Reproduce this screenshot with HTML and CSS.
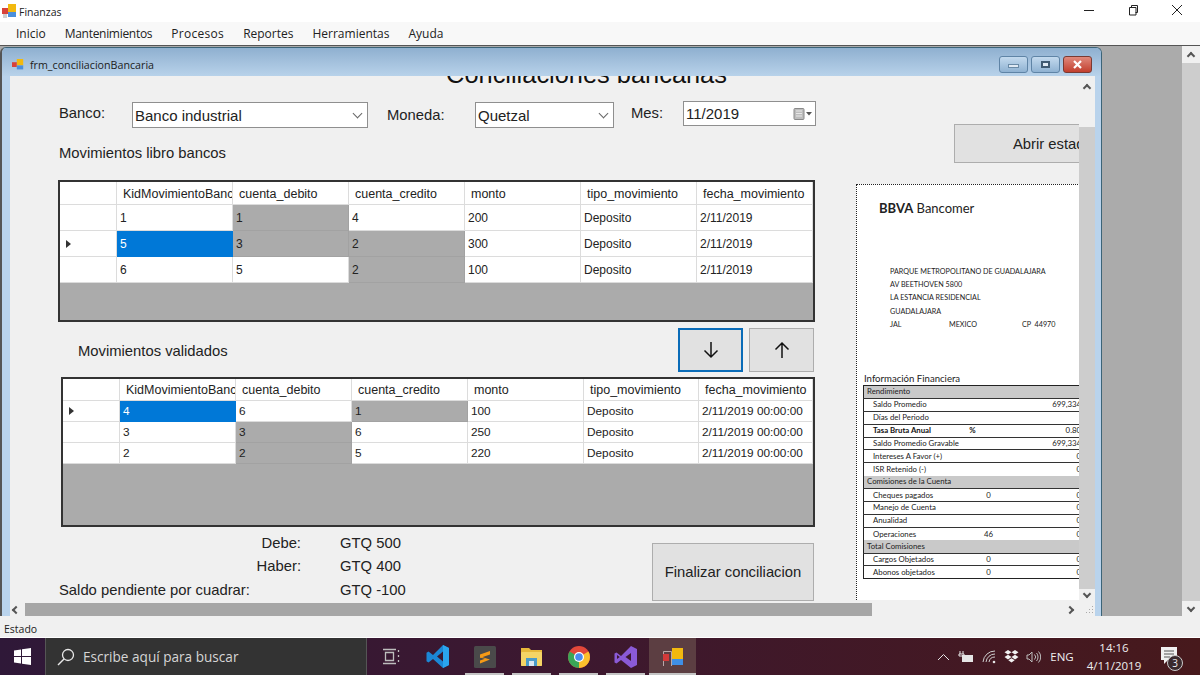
FILE: index.html
```html
<!DOCTYPE html>
<html>
<head>
  <title>Finanzas</title>
  <link rel="stylesheet" href="styles.css">
</head>
<body>
  <div class="titlebar">
    <svg class="app-icon" width="15" height="15" viewBox="0 0 15 15"><rect x="6" y="0" width="8" height="8" fill="#f2b90f"/><rect x="0" y="4" width="6" height="6" fill="#d8423a"/><rect x="6" y="8" width="8" height="5" fill="#4b8fdc"/><rect x="1" y="10" width="4" height="4" fill="#cfcfcf"/></svg>
    <span class="titlebar-text">Finanzas</span>
    <div class="wincontrols">
      <span class="winbtn"><svg width="12" height="12" viewBox="0 0 12 12"><path d="M1 6.5h10" stroke="#222" fill="none"/></svg></span>
      <span class="winbtn"><svg width="12" height="12" viewBox="0 0 12 12"><path d="M2.5 3.5h6.5v7.500h-6.500zM4.500 3.500v-2h6v7h-2" stroke="#222" fill="none"/></svg></span>
      <span class="winbtn"><svg width="12" height="12" viewBox="0 0 12 12"><path d="M1 1l10 10M11 1l-10 10" stroke="#222" fill="none"/></svg></span>
    </div>
  </div>

  <div class="menubar">
    <span class="menu-item">Inicio</span>
    <span class="menu-item menu-tight">Mantenimientos</span>
    <span class="menu-item menu-loose">Procesos</span>
    <span class="menu-item">Reportes</span>
    <span class="menu-item">Herramientas</span>
    <span class="menu-item">Ayuda</span>
  </div>

  <div class="mdi">
    <div class="mdi-canvas">
      <div class="child">
        <div class="child-title">
          <svg class="child-icon" width="12" height="12" viewBox="0 0 15 15"><rect x="6" y="0" width="8" height="8" fill="#f2b90f"/><rect x="0" y="4" width="6" height="6" fill="#d8423a"/><rect x="6" y="8" width="8" height="5" fill="#4b8fdc"/></svg>
          <span class="child-name">frm_conciliacionBancaria</span>
          <div class="child-btns">
            <span class="child-btn"><i class="glyph-min"></i></span>
            <span class="child-btn"><i class="glyph-max"></i></span>
            <span class="child-btn child-close"><svg width="11" height="9" viewBox="0 0 11 9"><path d="M2 1l7 7M9 1l-7 7" stroke="#fff" stroke-width="2.200" fill="none"/></svg></span>
          </div>
        </div>
        <div class="client">
          <div class="client-top">
            <div class="content">
              <div class="heading"><h1>Conciliaciones bancarias</h1></div>
              <div class="columns">
                <div class="left-col">
                  <div class="filters">
                    <label class="lbl lbl-banco">Banco:</label>
                    <div class="combo combo-banco">Banco industrial<i class="combo-chev"></i></div>
                    <label class="lbl lbl-moneda">Moneda:</label>
                    <div class="combo combo-moneda">Quetzal<i class="combo-chev"></i></div>
                    <label class="lbl lbl-mes">Mes:</label>
                    <div class="combo combo-date">11/2019
                      <svg class="date-icon" width="20" height="12" viewBox="0 0 20 12"><rect x="1" y="0.500" width="10" height="11" rx="1" fill="#bdbdbd" stroke="#8a8a8a"/><path d="M3 3h6M3 5.500h6M3 8h6" stroke="#e8e8e8"/><path d="M13 4h6l-3 3.500z" fill="#555"/></svg>
                    </div>
                  </div>

                  <div class="lbl section-label">Movimientos libro bancos</div>
                  <div class="grid grid-one">
                    <table>
                      <colgroup><col class="c-head"><col class="c-116"><col class="c-116"><col class="c-116"><col class="c-116"><col class="c-116"><col class="c-116"></colgroup>
                      <tr class="head"><th></th><th>KidMovimientoBanco</th><th>cuenta_debito</th><th>cuenta_credito</th><th>monto</th><th>tipo_movimiento</th><th>fecha_movimiento</th></tr>
                      <tr><td></td><td>1</td><td class="off">1</td><td>4</td><td>200</td><td>Deposito</td><td>2/11/2019</td></tr>
                      <tr><td><i class="row-arrow"></i></td><td class="sel">5</td><td class="off">3</td><td class="off">2</td><td>300</td><td>Deposito</td><td>2/11/2019</td></tr>
                      <tr><td></td><td>6</td><td>5</td><td class="off">2</td><td>100</td><td>Deposito</td><td>2/11/2019</td></tr>
                    </table>
                  </div>

                  <div class="mid-row">
                    <div class="lbl mid-label">Movimientos validados</div>
                    <div class="move-btns">
                      <button class="btn btn-move btn-focus"><svg width="18" height="18" viewBox="0 0 18 18"><path d="M9 1v15M2.500 9.500l6.500 6.500 6.500-6.500" stroke="#111" stroke-width="1.500" fill="none"/></svg></button>
                      <button class="btn btn-move"><svg width="18" height="18" viewBox="0 0 18 18"><path d="M9 17v-15M2.500 8.500l6.500-6.500 6.500 6.500" stroke="#111" stroke-width="1.500" fill="none"/></svg></button>
                    </div>
                  </div>

                  <div class="grid grid-two">
                    <table>
                      <colgroup><col class="c-head"><col class="c-116"><col class="c-116"><col class="c-116"><col class="c-116"><col class="c-115"><col class="c-114"></colgroup>
                      <tr class="head"><th></th><th>KidMovimientoBanco</th><th>cuenta_debito</th><th>cuenta_credito</th><th>monto</th><th>tipo_movimiento</th><th>fecha_movimiento</th></tr>
                      <tr><td><i class="row-arrow"></i></td><td class="sel">4</td><td>6</td><td class="off">1</td><td>100</td><td>Deposito</td><td>2/11/2019 00:00:00</td></tr>
                      <tr><td></td><td>3</td><td class="off">3</td><td>6</td><td>250</td><td>Deposito</td><td>2/11/2019 00:00:00</td></tr>
                      <tr><td></td><td>2</td><td class="off">2</td><td>5</td><td>220</td><td>Deposito</td><td>2/11/2019 00:00:00</td></tr>
                    </table>
                  </div>

                  <div class="bottom-row">
                    <div class="summary">
                      <span class="lbl sum-key">Debe:</span><span class="lbl">GTQ 500</span>
                      <span class="lbl sum-key">Haber:</span><span class="lbl">GTQ 400</span>
                      <span class="lbl">Saldo pendiente por cuadrar:</span><span class="lbl">GTQ -100</span>
                    </div>
                    <button class="btn btn-finish">Finalizar conciliacion</button>
                  </div>
                </div>

                <div class="right-col">
                  <button class="btn btn-open">Abrir estado de cuenta</button>
                  <div class="statement">
                    <div class="bank-logo"><b>BBVA</b> Bancomer</div>
                    <div class="address">
                      <div>PARQUE METROPOLITANO DE GUADALAJARA</div>
                      <div>AV BEETHOVEN 5800</div>
                      <div>LA ESTANCIA RESIDENCIAL</div>
                      <div>GUADALAJARA</div>
                      <div class="addr-last"><span>JAL</span><span>MEXICO</span><span>CP&nbsp; 44970</span></div>
                    </div>
                    <div class="info-title">Información Financiera</div>
                    <table class="info">
                      <colgroup><col class="i-label"><col class="i-mid"><col class="i-value"></colgroup>
                      <tr class="band"><td colspan="3">Rendimiento</td></tr>
                      <tr><td>Saldo Promedio</td><td></td><td>699,334</td></tr>
                      <tr><td>Días del Periodo</td><td></td><td></td></tr>
                      <tr class="strong"><td>Tasa Bruta Anual</td><td class="pct">%</td><td>0.80</td></tr>
                      <tr><td>Saldo Promedio Gravable</td><td></td><td>699,334</td></tr>
                      <tr><td>Intereses A Favor (+)</td><td></td><td>0</td></tr>
                      <tr><td>ISR Retenido (-)</td><td></td><td>0</td></tr>
                      <tr class="band"><td colspan="3">Comisiones de la Cuenta</td></tr>
                      <tr><td>Cheques pagados</td><td>0</td><td>0</td></tr>
                      <tr><td>Manejo de Cuenta</td><td></td><td>0</td></tr>
                      <tr><td>Anualidad</td><td></td><td>0</td></tr>
                      <tr><td>Operaciones</td><td>46</td><td>0</td></tr>
                      <tr class="band"><td colspan="3">Total Comisiones</td></tr>
                      <tr><td>Cargos Objetados</td><td>0</td><td>0</td></tr>
                      <tr><td>Abonos objetados</td><td>0</td><td>0</td></tr>
                    </table>
                  </div>
                </div>
              </div>
            </div>
            <div class="vscroll">
              <i class="chev chev-up"></i>
              <div class="vtrack"><div class="vthumb"></div></div>
              <i class="chev chev-down"></i>
            </div>
          </div>
          <div class="hscroll">
            <i class="chev chev-left"></i>
            <div class="hthumb"></div>
            <i class="chev chev-right"></i>
            <svg class="grip" width="12" height="12" viewBox="0 0 12 12"><path d="M9 2h1v1h-1zM6 5h1v1h-1zM9 5h1v1h-1zM3 8h1v1h-1zM6 8h1v1h-1zM9 8h1v1h-1z" fill="#aaa"/></svg>
          </div>
        </div>
      </div>
    </div>
    <div class="outer-scroll">
      <i class="chev chev-up"></i>
      <div class="outer-thumb"></div>
      <i class="chev chev-down"></i>
    </div>
  </div>

  <div class="statusbar">Estado</div>

  <div class="taskbar">
    <div class="start">
      <svg width="17" height="17" viewBox="0 0 17 17"><path d="M0 2.500l7-1v6.500h-7zM8 1.300l9-1.300v8h-9zM0 9h7v6.500l-7-1zM8 9h9v8l-9-1.300z" fill="#fff"/></svg>
    </div>
    <div class="search">
      <svg width="18" height="18" viewBox="0 0 18 18"><circle cx="11" cy="7" r="5.500" stroke="#e8e8e8" stroke-width="1.300" fill="none"/><path d="M7 11l-6 6" stroke="#e8e8e8" stroke-width="1.500"/></svg>
      <span>Escribe aquí para buscar</span>
    </div>
    <div class="task">
      <svg width="18" height="17" viewBox="0 0 18 17"><path d="M3.500 4.500h8v8h-8zM1 1.500h13M1 15.500h13" stroke="#bdbdbd" stroke-width="1.300" fill="none"/><path d="M16.500 2v2M16.500 7v2M16.500 12v2" stroke="#bdbdbd" stroke-width="1.300"/></svg>
    </div>
    <div class="task">
      <svg width="24" height="23" viewBox="0 0 24 23"><path d="M17 0l6 3v17l-6 3-10-9-4.500 3.500-2-1.200v-8.600l2-1.200 4.500 3.500zM17 6.500l-6 5 6 5z" fill="#1b87d6"/><path d="M17 0l6 3v17l-6 3z" fill="#2aa4ee"/></svg>
    </div>
    <div class="task task-open">
      <svg width="22" height="22" viewBox="0 0 22 22"><rect width="22" height="22" rx="1.500" fill="#4a4a4a"/><path d="M6 8.500l10-3.500v3.500l-10 3.500zM6 10.500l10 3v0l-10 4v-3l5-1.800-5-1.200z" fill="#f59a16"/></svg>
    </div>
    <div class="task task-open">
      <svg width="21" height="19" viewBox="0 0 21 19"><path d="M0 1h8l2 2h11v15a1 1 0 0 1-1 1h-19a1 1 0 0 1-1-1z" fill="#e8b93a"/><rect x="0" y="5" width="21" height="14" rx="1" fill="#f5d566"/><rect x="5" y="11" width="11" height="8" fill="#4b9bc9"/><rect x="8" y="14" width="5" height="5" fill="#d9e8f2"/></svg>
    </div>
    <div class="task task-open">
      <svg width="22" height="22" viewBox="0 0 22 22"><circle cx="11" cy="11" r="11" fill="#e2483a"/><path d="M11 11L1.500 5.500A11 11 0 0 0 11 22z" fill="#3aa757"/><path d="M11 11v11A11 11 0 0 0 20.500 5.500z" fill="#fbc02d"/><circle cx="11" cy="11" r="5" fill="#fff"/><circle cx="11" cy="11" r="3.800" fill="#4a8bf0"/></svg>
    </div>
    <div class="task task-open">
      <svg width="24" height="22" viewBox="0 0 24 22"><path d="M17 0l6 3v16l-6 3-10-8-4.500 3.500-2-1v-9l2-1 4.500 3.500zM17 7l-5.500 4 5.500 4zM3 9v4l2.800-2z" fill="#8a5ad6" fill-rule="evenodd"/></svg>
    </div>
    <div class="task task-open task-active">
      <svg width="22" height="20" viewBox="0 0 22 20"><path d="M1.500 4.500h8M1.500 19v-14.500M9.500 4.500v14.500" stroke="#b8a8a8" fill="none"/><rect x="1" y="7" width="6" height="7" fill="#d33a3a"/><rect x="10" y="1" width="11" height="11" fill="#f2b90f"/><rect x="10" y="12" width="11" height="6" fill="#3f8fe6"/></svg>
    </div>

    <div class="tray">
      <span class="tray-ico t-chev"><svg width="13" height="8" viewBox="0 0 13 8"><path d="M1 7l5.500-5.500L12 7" stroke="#e6e6e6" fill="none"/></svg></span>
      <span class="tray-ico t-batt"><svg width="16" height="13" viewBox="0 0 16 13"><path d="M2 1v3M5 1v3M1 4h5v2h-5z" stroke="#e6e6e6" fill="none"/><rect x="4" y="5" width="11" height="7" fill="#e6e6e6"/></svg></span>
      <span class="tray-ico t-wifi"><svg width="16" height="14" viewBox="0 0 16 14"><path d="M1 12a12 12 0 0 1 12-11M4 12a9 9 0 0 1 9-8M7 12a6 6 0 0 1 6-5" stroke="#cfcfcf" fill="none"/><circle cx="12" cy="12" r="1.300" fill="#e6e6e6"/></svg></span>
      <span class="tray-ico t-drop"><svg width="15" height="14" viewBox="0 0 15 14"><path d="M4 0l3.500 2.300L4 4.600.5 2.300zM11 0l3.500 2.300L11 4.600 7.500 2.300zM4 4.800l3.500 2.300L4 9.400.5 7.100zM11 4.800l3.500 2.300-3.500 2.300-3.500-2.300zM4.300 10.300l3.200-2 3.200 2-3.200 2.200z" fill="#f2f2f2"/></svg></span>
      <span class="tray-ico t-vol"><svg width="15" height="14" viewBox="0 0 15 14"><path d="M1 5h2l3-3v10l-3-3h-2zM8.500 4.500a3.500 3.500 0 0 1 0 5M10.500 3a6 6 0 0 1 0 8M12.500 1.500a8 8 0 0 1 0 11" stroke="#bdbdbd" fill="none"/></svg></span>
      <span class="tray-lang">ENG</span>
      <div class="clock"><div>14:16</div><div>4/11/2019</div></div>
      <div class="notif">
        <svg width="17" height="19" viewBox="0 0 17 19"><path d="M0 0h16v13h-9l-4 4v-4h-3z" fill="#f0f0f0"/><path d="M3 4h10M3 7h10M3 10h6" stroke="#555"/></svg>
        <span class="badge">3</span>
      </div>
    </div>
  </div>
</body>
</html>
```

FILE: styles.css
```css
* {
  box-sizing: border-box;
}

html, body {
  margin: 0;
  padding: 0;
}

body {
  width: 1200px;
  height: 675px;
  display: flex;
  flex-direction: column;
  overflow: hidden;
  font-family: "Liberation Sans", Arial, sans-serif;
  color: #222;
  background: #f0f0f0;
}

/* top window */
.titlebar {
  height: 22px;
  flex: none;
  display: flex;
  align-items: center;
  background: #fff;
  padding-left: 2px;
}

.titlebar-text {
  font-family: "Open Sans", sans-serif;
  font-size: 10.5px;
  margin-left: 2px;
  margin-top: 1px;
}

.wincontrols {
  display: flex;
  margin-left: auto;
  margin-top: -2px;
  margin-right: 1px;
}

.winbtn {
  width: 44px;
  display: flex;
  justify-content: center;
}

.menubar {
  height: 23px;
  flex: none;
  display: flex;
  align-items: center;
  padding-left: 6.5px;
  background: #f8f8f8;
  font-family: "Open Sans", sans-serif;
  font-size: 12px;
}

.menu-item {
  padding: 0 9.5px;
}

.menu-tight {
  letter-spacing: -0.3px;
}

.menu-loose {
  letter-spacing: 0.3px;
}

/* mdi area */
.mdi {
  flex: 1;
  min-height: 0;
  display: flex;
  border-top: 1px solid #555;
  background: #ababab;
}

.mdi-canvas {
  flex: 1;
  overflow: hidden;
  padding-top: 1px;
}

.child {
  width: 1102px;
  height: 100%;
  display: flex;
  flex-direction: column;
  background: #b9d3ec;
  border: 1px solid #3c6478;
  border-left: 2px solid #555;
  border-bottom: none;
  border-radius: 6px 6px 0 0;
}

.child-title {
  height: 28px;
  flex: none;
  display: flex;
  align-items: center;
  padding: 6px 0 0 10px;
  background: linear-gradient(#8fb0d0, #b8d2ea);
  border-radius: 5px 5px 0 0;
}

.child-name {
  font-family: "Open Sans", sans-serif;
  font-size: 10.7px;
  margin-left: 6px;
  color: #1c1c1c;
}

.child-btns {
  display: flex;
  gap: 3px;
  margin-left: auto;
  margin-right: 9px;
  margin-top: -2px;
}

.child-btn {
  width: 29px;
  height: 17px;
  display: flex;
  align-items: center;
  justify-content: center;
  border: 1px solid #5f84a6;
  border-radius: 3px;
  background: linear-gradient(#c4daee, #8fb2d2);
}

.child-close {
  border-color: #7a3a32;
  background: linear-gradient(#e0897c, #c23f2e);
}

.glyph-min {
  width: 11px;
  height: 4px;
  margin-top: 3px;
  border: 1px solid #6a8aa6;
  background: #dfe9f3;
}

.glyph-max {
  width: 9px;
  height: 7px;
  border: 2px solid #3f5a72;
  background: #dfe9f3;
}

.client {
  flex: 1;
  min-height: 0;
  display: flex;
  flex-direction: column;
  margin: 0 6px 0 8px;
  background: #f0f0f0;
}

.client-top {
  flex: 1;
  min-height: 0;
  display: flex;
}

.content {
  flex: 1;
  min-width: 0;
  overflow: hidden;
}

.heading {
  height: 10px;
  overflow: hidden;
  display: flex;
  align-items: flex-end;
  padding: 0 0 3px 84px;
  justify-content: center;
}

.heading h1 {
  margin: 0;
  flex: none;
  font-size: 25.4px;
  font-weight: normal;
  line-height: 18px;
  color: #111;
}

.columns {
  display: flex;
}

.left-col {
  width: 846px;
  flex: none;
  padding-left: 49px;
}

.lbl {
  font-size: 14.8px;
  line-height: 18px;
  color: #222;
}

/* filters row */
.filters {
  display: flex;
  align-items: center;
  height: 26px;
  margin-top: 16px;
}

.lbl-banco {
  width: 73px;
  margin-top: -4px;
}

.lbl-moneda {
  width: 88px;
  margin-left: 19px;
}

.lbl-mes {
  width: 52px;
  margin-left: 17px;
  margin-top: -4px;
}

.combo {
  height: 26px;
  display: flex;
  align-items: center;
  padding-left: 2px;
  font-size: 15px;
  background: #fff;
  border: 1px solid #8f8f8f;
}

.combo-banco {
  width: 236px;
}

.combo-moneda {
  width: 139px;
}

.combo-date {
  width: 133px;
  height: 25px;
  margin-top: -3px;
}

.combo-chev {
  width: 7px;
  height: 7px;
  margin-left: auto;
  margin-right: 6px;
  margin-top: -3px;
  border-right: 1px solid #666;
  border-bottom: 1px solid #666;
  transform: rotate(45deg);
}

.date-icon {
  margin-left: auto;
  margin-right: 2px;
}

.section-label {
  margin-top: 16px;
}

/* data grids */
.grid {
  border: 2px solid #333;
  background: #ababab;
  overflow: hidden;
}

.grid table {
  border-collapse: separate;
  border-spacing: 0;
  table-layout: fixed;
  width: 100%;
}

.grid-one {
  width: 757px;
  height: 142px;
  margin-top: 18px;
  margin-left: -1px;
}

.grid-two {
  width: 754px;
  height: 150px;
  margin-top: 5px;
  margin-left: 2px;
}

.c-head { width: 57px; }
.c-116 { width: 116px; }
.c-115 { width: 115px; }
.c-114 { width: 114px; }

.grid th, .grid td {
  padding: 0 0 0 3px;
  background: #fff;
  border-right: 1px solid #dcdcdc;
  border-bottom: 1px solid #dcdcdc;
  text-align: left;
  white-space: nowrap;
  overflow: hidden;
  font-size: 12px;
  font-weight: normal;
  color: #222;
}

.grid th {
  height: 22px;
  padding-left: 6px;
  padding-top: 1px;
  font-size: 12.5px;
}

.grid-one th {
  height: 23px;
}

.grid-one td {
  height: 26px;
}

.grid-two td {
  height: 21px;
  font-size: 11.8px;
}

.grid td.off {
  background: #ababab;
  border-color: #a2a2a2;
}

.grid td.sel {
  background: #0078d7;
  border-color: #0078d7;
  color: #fff;
}

.row-arrow {
  display: block;
  width: 0;
  height: 0;
  margin-left: 3px;
  border-left: 5px solid #333;
  border-top: 4px solid transparent;
  border-bottom: 4px solid transparent;
}

.mid-row {
  width: 755px;
  height: 44px;
  margin-top: 6px;
  padding-left: 19px;
  display: flex;
  align-items: center;
  justify-content: space-between;
}

.mid-label {
  margin-top: 2px;
}

.move-btns {
  display: flex;
  gap: 6px;
}

.btn {
  font-family: "Liberation Sans", Arial, sans-serif;
  font-size: 14.8px;
  color: #222;
  background: #e1e1e1;
  border: 1px solid #adadad;
  padding: 0;
}

.btn-move {
  width: 65px;
  height: 44px;
  display: flex;
  align-items: center;
  justify-content: center;
}

.btn-focus {
  border: 2px solid #0a6cb8;
}

.bottom-row {
  width: 755px;
  margin-top: 4px;
  display: flex;
  justify-content: space-between;
  align-items: flex-start;
}

.summary {
  display: grid;
  grid-template-columns: 242px auto;
  column-gap: 39px;
  grid-auto-rows: 23.5px;
  align-items: center;
}

.sum-key {
  text-align: right;
}

.btn-finish {
  width: 162px;
  height: 58px;
  margin-top: 12px;
}

/* right side with the bank statement */
.right-col {
  flex: 1;
  min-width: 0;
  overflow: hidden;
}

.btn-open {
  display: block;
  width: 320px;
  height: 39px;
  margin-top: 38px;
  margin-left: 98px;
  padding-left: 58px;
  text-align: left;
}

.statement {
  height: 416px;
  margin-top: 21px;
  padding-left: 6px;
  width: 300px;
  background: #fff;
  border-top: 1px dotted #222;
  border-left: 1px dotted #222;
  font-family: "Lato", sans-serif;
  color: #333;
  overflow: hidden;
}

.bank-logo {
  margin-top: 15px;
  margin-left: 16px;
  font-size: 13px;
  line-height: 16px;
  color: #222;
}

.address {
  margin-top: 49px;
  margin-left: 27px;
  font-size: 7.2px;
  line-height: 13.2px;
  color: #222;
}

.addr-last {
  display: flex;
}

.addr-last span:nth-child(1) { width: 59px; }
.addr-last span:nth-child(2) { width: 73px; }

.info-title {
  margin-top: 42px;
  margin-left: 1px;
  font-size: 9.6px;
  line-height: 12px;
  color: #222;
}

.info {
  width: 225px;
  table-layout: fixed;
  border-collapse: collapse;
  border: 1px solid #222;
  font-size: 7.8px;
  color: #222;
}

.i-label { width: 100px; }
.i-mid { width: 50px; }
.i-value { width: 75px; }

.info td {
  height: 12.9px;
  padding: 0;
  border-top: 1px solid #333;
  line-height: 11px;
  white-space: nowrap;
}

.info td:nth-child(1) {
  padding-left: 9px;
}

.info td:nth-child(2) {
  text-align: center;
}

.info td:nth-child(3) {
  text-align: right;
  padding-right: 7px;
}

.info td.pct {
  padding-right: 32px;
}

.info .band td {
  padding-left: 3px;
  background: #c9c9c9;
  border-top: none;
}

.info .strong td {
  font-weight: bold;
  color: #111;
}

.info .strong td:nth-child(3) {
  font-weight: normal;
}

/* scrollbars */
.chev {
  display: block;
  flex: none;
  width: 6px;
  height: 6px;
  border-top: 2px solid #555;
  border-left: 2px solid #555;
}

.chev-up { transform: rotate(45deg); }
.chev-down { transform: rotate(225deg); }
.chev-left { transform: rotate(-45deg); }
.chev-right { transform: rotate(135deg); }

.vscroll {
  width: 16px;
  flex: none;
  display: flex;
  flex-direction: column;
  align-items: center;
  padding: 9px 0 6px;
  background: #f0f0f0;
}

.vtrack {
  flex: 1;
  width: 100%;
  padding: 32px 0 0;
  margin: 4px 0 2px;
}

.vthumb {
  height: 100%;
  background: #cdcdcd;
}

.hscroll {
  height: 13px;
  flex: none;
  display: flex;
  align-items: center;
  padding-left: 3px;
  background: #f0f0f0;
}

.hthumb {
  width: 847px;
  height: 13px;
  margin-left: 6px;
  background: #a6a6a6;
}

.hscroll .chev-right {
  margin-left: 195px;
}

.grip {
  margin-left: auto;
}

.outer-scroll {
  width: 18px;
  flex: none;
  display: flex;
  flex-direction: column;
  align-items: center;
  padding: 7px 0 5px;
  background: #f0f0f0;
}

.outer-thumb {
  flex: 1;
  width: 100%;
  margin: 4px 0;
  background: #cdcdcd;
}

/* bottom bars */
.statusbar {
  height: 22px;
  flex: none;
  padding: 6px 0 0 4px;
  font-family: "Open Sans", sans-serif;
  font-size: 10.5px;
  line-height: 15px;
  background: #f0f0f0;
  border-bottom: 1px solid #fff;
}

.taskbar {
  height: 37px;
  flex: none;
  display: flex;
  align-items: stretch;
  background: linear-gradient(90deg, #2f1838, #3c1830 45%, #47191c);
}

.start {
  width: 45px;
  flex: none;
  display: flex;
  align-items: center;
  justify-content: center;
}

.search {
  width: 322px;
  flex: none;
  display: flex;
  align-items: center;
  padding-left: 11px;
  gap: 8px;
  background: #333;
  border-left: 1px solid #555;
  border-right: 1px solid #555;
  font-family: "Open Sans", sans-serif;
  font-size: 13.6px;
  color: #d6d6d6;
}

.task {
  width: 47px;
  flex: none;
  display: flex;
  align-items: center;
  justify-content: center;
}

.task-open {
  background: linear-gradient(#c4c4c4, #c4c4c4) no-repeat center bottom / 39px 2px;
}

.task-active {
  background: #5c3e42 linear-gradient(#c4c4c4, #c4c4c4) no-repeat center bottom / 100% 2px;
}

.tray {
  margin-left: auto;
  padding-right: 10px;
  display: flex;
  align-items: center;
  color: #eee;
  font-family: "Open Sans", sans-serif;
}

.tray-ico {
  display: flex;
  justify-content: center;
}

.t-chev { width: 22px; }
.t-batt { width: 24px; }
.t-wifi { width: 23px; }
.t-drop { width: 21px; }
.t-vol { width: 22px; }

.tray-lang {
  width: 36px;
  font-size: 11.5px;
  text-align: center;
}

.clock {
  width: 68px;
  text-align: center;
  font-size: 11.5px;
  line-height: 18px;
}

.notif {
  width: 42px;
  display: flex;
  justify-content: center;
  position: relative;
}

.badge {
  position: absolute;
  top: 8px;
  left: 19px;
  width: 16px;
  height: 16px;
  border: 1px solid #ccc;
  border-radius: 50%;
  background: #3a2a2e;
  font-size: 10px;
  line-height: 14px;
  text-align: center;
}
```
